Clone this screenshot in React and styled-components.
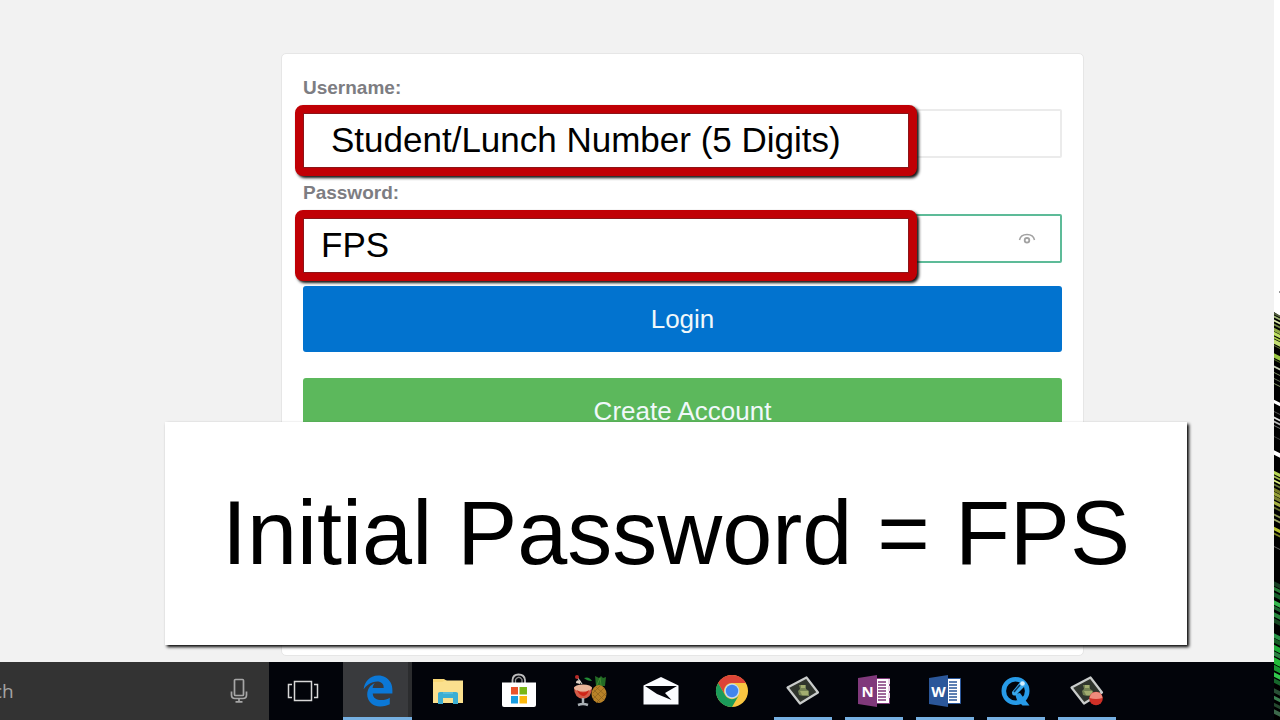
import React from 'react';
import styled, { createGlobalStyle } from 'styled-components';
import { FaEdgeLegacy } from 'react-icons/fa';

const GlobalStyle = createGlobalStyle`
  * {
    box-sizing: border-box;
  }

  body {
    margin: 0;
    font-family: 'Liberation Sans', Arial, sans-serif;
    background: #f2f2f2;
  }
`;

const Desktop = styled.div`
  display: grid;
  grid-template-columns: minmax(0, 1fr) 6px;
  min-height: 100vh;
`;

const Screen = styled.div`
  display: flex;
  flex-direction: column;
`;

const Page = styled.main`
  position: relative;
  display: flex;
  flex: 1;
  padding: 53px 190px 6px 281px;
`;

const Card = styled.form`
  flex: 1;
  padding: 22px 21px;
  border: 1px solid #e6e6e6;
  border-radius: 5px;
  background: #fff;
`;

const Field = styled.div`
  margin-bottom: 23px;
`;

const Label = styled.label`
  display: block;
  margin-bottom: 9px;
  color: #7d7d82;
  font-size: 19px;
  font-weight: bold;
  line-height: 24px;
`;

const Control = styled.div`
  position: relative;
`;

const Input = styled.input`
  display: block;
  width: 100%;
  height: 49px;
  padding: 0 16px;
  border: ${({ $active }) => ($active ? '2px solid #5dbb98' : '2px solid #ebebeb')};
  border-radius: 2px;
  outline: none;
  background: #fff;
  font-size: 19px;
`;

const RevealButton = styled.button`
  position: absolute;
  top: 14px;
  right: 24px;
  display: flex;
  padding: 2px;
  border: 0;
  background: none;
`;

const Callout = styled.div`
  position: absolute;
  top: -4px;
  right: 145px;
  left: -8px;
  height: 71px;
  padding-left: ${({ $indent }) => $indent}px;
  border: 8px solid #c00005;
  border-radius: 8px;
  background: #fff;
  box-shadow: 2px 2px 3px #111;
  color: #000;
  font-size: 35px;
  line-height: 54px;
  white-space: nowrap;

  &::before {
    content: '';
    position: absolute;
    inset: 0;
    border: 1px solid #8c1518;
  }
`;

const Button = styled.button`
  display: block;
  width: 100%;
  height: 66px;
  margin-bottom: 26px;
  border: 0;
  border-radius: 3px;
  background: ${({ $color }) => $color};
  color: #f0f8fa;
  font-family: inherit;
  font-size: 26px;
`;

const Banner = styled.div`
  position: absolute;
  right: 87px;
  bottom: 17px;
  left: 165px;
  height: 223px;
  background: #fff;
  box-shadow: 2px 2px 3px #000;
  color: #000;
  font-size: 90px;
  line-height: 223px;
  text-align: center;
  white-space: nowrap;
`;

const Taskbar = styled.nav`
  display: flex;
  height: 58px;
  background: #02040a;
`;

const SearchBox = styled.div`
  display: flex;
  align-items: center;
  width: 269px;
  padding-right: 21px;
  overflow: hidden;
  background: #333;
`;

const SearchInput = styled.input`
  flex: 1;
  min-width: 0;
  margin-left: -7px;
  padding: 0;
  border: 0;
  outline: none;
  background: none;
  color: #a5a5a5;
  font-family: 'Open Sans', sans-serif;
  font-size: 19px;

  &::placeholder {
    color: #a5a5a5;
    opacity: 1;
  }
`;

const TaskButton = styled.button`
  position: relative;
  display: flex;
  flex: none;
  align-items: center;
  justify-content: center;
  width: 71px;
  padding: 0;
  border: 0;
  background: none;

  &::after {
    content: '';
    position: absolute;
    right: 6px;
    bottom: 0;
    left: 7px;
    height: 3px;
    background: ${({ $running }) => ($running ? '#76b0e2' : 'transparent')};
  }
`;

const TaskViewButton = styled(TaskButton)`
  width: 74px;
  padding-right: 6px;
`;

const ActiveTaskButton = styled(TaskButton)`
  width: 69px;
  background: #393a3d;
  box-shadow: inset -4px 0 #2b2c2e;

  &::after {
    right: 0;
    left: 0;
    background: #76b0e2;
  }
`;

const Wallpaper = styled.svg`
  width: 100%;
  height: 100%;
`;

function Icon({ size = 36, children }) {
  return (
    <svg width={size} height={size} viewBox="0 0 36 36" aria-hidden="true">
      {children}
    </svg>
  );
}

function EyeIcon() {
  return (
    <svg width="18" height="18" viewBox="0 0 18 18" fill="none" stroke="#a2a2a2">
      <path d="M1.5 10C3 2.5 15 2.5 16.5 10" strokeWidth="1.5" />
      <circle cx="9" cy="10.3" r="2.3" strokeWidth="1.8" />
    </svg>
  );
}

function MicIcon() {
  return (
    <svg width="18" height="26" viewBox="0 0 18 26" fill="none" stroke="#a6a6a6" strokeWidth="1.7">
      <rect x="4.5" y="1.5" width="9" height="16" rx="1" />
      <path d="M1.5 13.500V17Q1.5 20.5 5 20.5H13Q16.5 20.5 16.5 17V13.5M9 20.5V23.5M5.5 23.8H12.5" />
    </svg>
  );
}

function TaskViewIcon() {
  return (
    <Icon>
      <g fill="none" stroke="#d8d8d8" strokeWidth="1.5">
        <rect x="9.5" y="8.5" width="17" height="19" />
        <path d="M7 11.5H3.5V24.5H7M29 11.5H32.5V24.5H29" />
      </g>
    </Icon>
  );
}

function FolderIcon() {
  return (
    <Icon>
      <path d="M3 6H14L17 8H33V30H3Z" fill="#f8d776" />
      <path d="M3 9H12L15 7.5H33V30H3Z" fill="#fbe08e" />
      <path d="M8 31V20.5Q8 19 10 19H26Q28 19 28 20.5V31H23V25H13V31Z" fill="#3caed3" />
      <path d="M13 20H23" stroke="#78cce0" />
    </Icon>
  );
}

function StoreIcon() {
  return (
    <Icon>
      <path d="M11.5 12V7Q12 1.5 17.5 1.5Q23.5 1.5 24 7V12" fill="none" stroke="#bdbdbd" strokeWidth="1.8" />
      <path d="M14.5 10V6.5Q18 2 21 6.5V10" fill="none" stroke="#8f8f8f" strokeWidth="1.3" />
      <path d="M1 9.5H35V32Q35 34 33 34H3Q1 34 1 32Z" fill="#fff" />
      <path d="M10 14H17V21.5H10Z" fill="#e9532c" />
      <path d="M18.5 14H26V21.5H18.5Z" fill="#79b718" />
      <path d="M10 23H17V30.5H10Z" fill="#189de2" />
      <path d="M18.5 23H26V30.5H18.5Z" fill="#fbb80d" />
    </Icon>
  );
}

function CocktailIcon() {
  return (
    <Icon>
      <path d="M24 13L23 3L27 5L29 3L31 5L34 4L33 13Z" fill="#236b25" />
      <path d="M25 12L28 5L29 12" stroke="#3f8c31" fill="none" />
      <ellipse cx="27" cy="21" rx="7.500" ry="9" fill="#b88228" />
      <path d="M22 17L32 27M24 14L34 23M21 22L29 30M32 15L21 26M34 20L24 30M28 13L21 20" stroke="#8a601d" strokeWidth="0.7" />
      <path d="M2 14Q2 25 11 26Q20 25 20 14Z" fill="#d45b47" />
      <ellipse cx="11" cy="15" rx="9" ry="3.5" fill="#e8b399" />
      <path d="M5 17Q11 22 17 17Q15 23 11 23Q7 22 5 17" fill="#cf2518" />
      <path d="M11 25V31M6 32Q11 30 16 32" stroke="#aab0b4" strokeWidth="2.5" fill="none" />
      <path d="M5 4L10 11" stroke="#c9cdc9" strokeWidth="1.2" />
      <circle cx="5" cy="4" r="2" fill="#ba2b28" />
      <path d="M4 10Q4 6 9 8L8 11Z" fill="#ddd0c5" />
      <path d="M12 5Q17 3 20 8Q15 8 12 5Z" fill="#238b35" />
    </Icon>
  );
}

function MailIcon() {
  return (
    <Icon>
      <path d="M0.5 12.5L18 4L35.5 12.5V31.5H0.500Z" fill="#fafcff" />
      <path d="M2 13H34L22 20L28.500 27L14 21Z" fill="#02040a" />
    </Icon>
  );
}

function ChromeIcon() {
  return (
    <Icon>
      <circle cx="18" cy="18" r="16" fill="#f9c641" />
      <path d="M4.1 10A16 16 0 0 1 31.9 10H18A8 8 0 0 0 11 22Z" fill="#dc4437" />
      <path d="M4.1 10A16 16 0 0 0 18 34L25 22A8 8 0 0 1 11 22Z" fill="#1b9b59" />
      <circle cx="18" cy="18" r="7.5" fill="#c4dbee" />
      <circle cx="18" cy="18" r="6.2" fill="#4285ee" />
    </Icon>
  );
}

function FilmIcon({ recording }) {
  return (
    <Icon>
      <path d="M2.5 14.5L21.5 4.5L33 19.500L15 30.5Z" fill="#32362f" stroke="#c9cccb" strokeWidth="2.2" strokeLinejoin="round" />
      <path d="M7 15L21 8L29 19L16 27Z" fill="#2f352d" />
      <path d="M14 12H21V16L24 18V23H18L14 22L13 18L15 16Z" fill="#758355" />
      <path d="M16 12H20V15H16ZM15 18H23V22H17Z" fill="#a2ad70" />
      {recording && (
        <>
          <circle cx="27" cy="25.5" r="6.8" fill="#cf3027" />
          <path d="M20.500 25Q22 18 28 19Q33 20 33.500 25Q27 27 20.500 25" fill="#ee8b7c" />
        </>
      )}
    </Icon>
  );
}

function OfficeIcon({ letter, color, tabs }) {
  return (
    <Icon>
      <path d="M18 5.5H33.5V30.5H18Z" fill="#fff" stroke={color} />
      <path d="M22 9H30M22 12H30M22 15H30M22 18H30M22 21H30M22 24H30M22 27H30" stroke={color} strokeWidth="1.3" />
      {tabs && <path d="M32 6H34V11H32ZM32 13H34V18H32ZM32 20H34V25H32Z" fill="#ead4e7" />}
      <path d="M2 5L21 2V34L2 31Z" fill={color} />
      <text x="11.5" y="24" fill="#fff" fontFamily="Open Sans, sans-serif" fontSize="15" fontWeight="bold" textAnchor="middle">
        {letter}
      </text>
    </Icon>
  );
}

function QuickTimeIcon() {
  return (
    <Icon>
      <circle cx="17.5" cy="18" r="11.7" fill="none" stroke="#279be8" strokeWidth="4.6" />
      <path d="M17 21L22 20L31.500 32.500H24.500L19 27Z" fill="#279be8" />
      <path d="M14 19L23 8L28 12L18 22Q14 24 14 19Z" fill="#39a8eb" />
      <path d="M16 19L22 12" stroke="#0c3458" strokeWidth="1.5" />
      <circle cx="24.5" cy="10.5" r="2.3" fill="#d5efff" />
    </Icon>
  );
}

// y position, stroke width and colour of each streak
const streaks = [
  [315, 2, '#52603c'], [318, 2, '#a1b878'], [322, 2, '#d6e6a8'], [326, 2, '#748b43'],
  [331, 3, '#91ae46'], [335, 3, '#bfe164'], [339, 2, '#a6cc48'], [343, 4, '#c2dd72'],
  [347, 1, '#637a35'], [357, 4, '#9bc643'], [361, 1, '#536c25'], [368, 2, '#c8d0b7'],
  [374, 1, '#7d8b67'], [380, 1, '#67735a'], [385, 1, '#859469'], [403, 3, '#ffffff'],
  [413, 1, '#555555'], [419, 2, '#dddddd'], [423, 2, '#bbbbbb'], [427, 1, '#777777'],
  [438, 1, '#444444'], [454, 4, '#ffffff'], [474, 3, '#b6d555'], [478, 2, '#a1bd4c'],
  [482, 2, '#d8ed7f'], [486, 2, '#657733'], [491, 3, '#777e27'], [495, 3, '#99a339'],
  [499, 3, '#7b8230'], [504, 3, '#a5ae42'], [509, 2, '#676e2d'], [516, 2, '#88934d'],
  [521, 2, '#9ca766'], [530, 3, '#b6bf2d'], [535, 2, '#798122'], [548, 1, '#666666'],
  [585, 4, '#173e23'], [590, 3, '#277d38'], [596, 4, '#155c29'], [604, 4, '#35b84e'],
  [609, 3, '#1b6530'], [616, 4, '#27853c'], [622, 4, '#174723'], [637, 4, '#299347'],
  [642, 4, '#145d25'], [649, 5, '#1eac39'], [655, 4, '#2b8043'], [662, 6, '#22bd39'],
  [669, 5, '#179b31'], [676, 4, '#31c94d'], [682, 4, '#16662b'], [692, 4, '#284f35'],
  [699, 3, '#3a8050'], [706, 3, '#24482e'], [713, 4, '#3c684a'],
];

function WallpaperEdge() {
  return (
    <Wallpaper viewBox="0 0 6 720" preserveAspectRatio="none" aria-hidden="true">
      <rect width="6" height="720" fill="#000" />
      <path d="M0 0H6V316L0 312Z" fill="#fff" />
      <path d="M5 292H6" stroke="#333" />
      {streaks.map(([y, width, color]) => (
        <path key={y} d={`M-1 ${y - 2}L7 ${y + 2}`} stroke={color} strokeWidth={width} />
      ))}
    </Wallpaper>
  );
}

const tasks = [
  { name: 'File Explorer', icon: <FolderIcon /> },
  { name: 'Store', icon: <StoreIcon /> },
  { name: 'Games', icon: <CocktailIcon /> },
  { name: 'Mail', icon: <MailIcon /> },
  { name: 'Chrome', icon: <ChromeIcon /> },
  { name: 'Video editor', icon: <FilmIcon />, running: true },
  { name: 'OneNote', icon: <OfficeIcon letter="N" color="#80397b" tabs />, running: true },
  { name: 'Word', icon: <OfficeIcon letter="W" color="#2b579a" />, running: true },
  { name: 'QuickTime', icon: <QuickTimeIcon />, running: true },
  { name: 'Recorder', icon: <FilmIcon recording />, running: true },
];

function App() {
  return (
    <>
      <GlobalStyle />
      <Desktop>
        <Screen>
          <Page>
            <Card onSubmit={(event) => event.preventDefault()}>
              <Field>
                <Label htmlFor="username">Username:</Label>
                <Control>
                  <Input id="username" type="text" />
                  <Callout $indent={28}>Student/Lunch Number (5 Digits)</Callout>
                </Control>
              </Field>
              <Field>
                <Label htmlFor="password">Password:</Label>
                <Control>
                  <Input id="password" type="password" $active />
                  <RevealButton type="button" aria-label="Show password">
                    <EyeIcon />
                  </RevealButton>
                  <Callout $indent={18}>FPS</Callout>
                </Control>
              </Field>
              <Button type="submit" $color="#0273cf">Login</Button>
              <Button type="button" $color="#5cb85c">Create Account</Button>
            </Card>
            <Banner>Initial Password = FPS</Banner>
          </Page>
          <Taskbar>
            <SearchBox>
              <SearchInput type="text" aria-label="Search" placeholder="ch" />
              <MicIcon />
            </SearchBox>
            <TaskViewButton type="button" aria-label="Task view">
              <TaskViewIcon />
            </TaskViewButton>
            <ActiveTaskButton type="button" aria-label="Edge">
              <FaEdgeLegacy size={32} color="#0b78d7" />
            </ActiveTaskButton>
            {tasks.map(({ name, icon, running }) => (
              <TaskButton key={name} type="button" aria-label={name} $running={running}>
                {icon}
              </TaskButton>
            ))}
          </Taskbar>
        </Screen>
        <WallpaperEdge />
      </Desktop>
    </>
  );
}

export default App;
